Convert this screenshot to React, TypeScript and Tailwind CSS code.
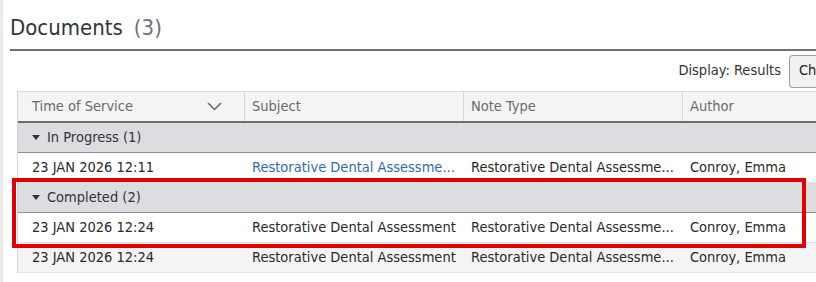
import React from 'react';

type Row = { time: string; subject: string; link?: boolean; noteType: string; author: string; shade?: boolean };

const font = { fontFamily: "'DejaVu Sans Condensed', 'DejaVu Sans', sans-serif" };

function Caret() {
  return (
    <svg width="8" height="5" viewBox="0 0 8 5" className="mr-[7px]">
      <path d="M0 0h8L4 5z" fill="#333" />
    </svg>
  );
}

function GroupRow({ label }: { label: string }) {
  return (
    <div className="h-[30px] flex items-center pl-[14px] bg-[#dcdde0] border-b border-[#8e8e8e] text-[#333]">
      <Caret />
      {label}
    </div>
  );
}

function DataRow({ row }: { row: Row }) {
  return (
    <div
      className={`h-[30px] flex items-center border-b border-[#e3e3e3] text-[#2a2a2a] whitespace-nowrap ${
        row.shade ? 'bg-[#f4f4f4]' : 'bg-white'
      }`}
    >
      <div className="w-[227px] pl-[14px] shrink-0">{row.time}</div>
      <div className={`w-[219px] pl-[7px] shrink-0 overflow-hidden ${row.link ? 'text-[#2e6cb5]' : ''}`}>{row.subject}</div>
      <div className="w-[219px] pl-[7px] shrink-0 overflow-hidden">{row.noteType}</div>
      <div className="w-[200px] pl-[7px] shrink-0">{row.author}</div>
    </div>
  );
}

export default function App() {
  return (
    <div className="w-[816px] h-[282px] overflow-hidden bg-white flex text-[14.5px]" style={font}>
      <div className="w-[3px] shrink-0 bg-[#ebebeb]" />
      <div className="flex-1 min-w-0 pl-[7px]">
        {/* Title */}
        <div className="h-[51px] border-b-2 border-[#707070] flex items-end pb-[7px] text-[22px] leading-[28px]">
          <span className="text-[#333]">Documents</span>
          <span className="ml-[11px] text-[#6b7280]">(3)</span>
        </div>

        {/* Toolbar */}
        <div className="h-[40px] flex items-center justify-end text-[#333]">
          <span className="mr-[8px]">Display: Results</span>
          <button className="h-[33px] w-[27px] shrink-0 rounded-l-[4px] border border-r-0 border-[#a0a0a0] bg-[#f1f1f1] text-left pl-[9px] text-[#222] overflow-hidden whitespace-nowrap">
            Ch
          </button>
        </div>

        {/* Table */}
        <div className="ml-[7px] w-[900px] border-l border-[#d4d4d4]">
          <div className="h-[32px] flex bg-[#f4f4f4] border-t border-[#dcdcdc] border-b-2 border-b-[#6e6e6e] text-[#6b6b6b]">
            <div className="w-[227px] shrink-0 pl-[14px] pr-[22px] flex items-center justify-between border-r border-[#d6d6d6]">
              <span>Time of Service</span>
              <svg width="15" height="9" viewBox="0 0 15 9">
                <path d="M1 1l6.5 6.5L14 1" fill="none" stroke="#666" strokeWidth="1.5" />
              </svg>
            </div>
            <div className="w-[219px] shrink-0 pl-[7px] flex items-center border-r border-[#d6d6d6]">Subject</div>
            <div className="w-[219px] shrink-0 pl-[7px] flex items-center border-r border-[#d6d6d6]">Note Type</div>
            <div className="w-[200px] shrink-0 pl-[7px] flex items-center">Author</div>
          </div>

          <GroupRow label="In Progress (1)" />
          <DataRow
            row={{
              time: '23 JAN 2026 12:11',
              subject: 'Restorative Dental Assessme...',
              link: true,
              noteType: 'Restorative Dental Assessme...',
              author: 'Conroy, Emma',
            }}
          />
          <GroupRow label="Completed (2)" />
          <DataRow
            row={{
              time: '23 JAN 2026 12:24',
              subject: 'Restorative Dental Assessment',
              noteType: 'Restorative Dental Assessme...',
              author: 'Conroy, Emma',
            }}
          />
          <DataRow
            row={{
              time: '23 JAN 2026 12:24',
              subject: 'Restorative Dental Assessment',
              noteType: 'Restorative Dental Assessme...',
              author: 'Conroy, Emma',
              shade: true,
            }}
          />
        </div>
      </div>

      {/* Red highlight box */}
      <div className="absolute left-[12px] top-[178px] w-[794px] h-[70px] border-4 border-[#e00000] pointer-events-none" />
    </div>
  );
}
